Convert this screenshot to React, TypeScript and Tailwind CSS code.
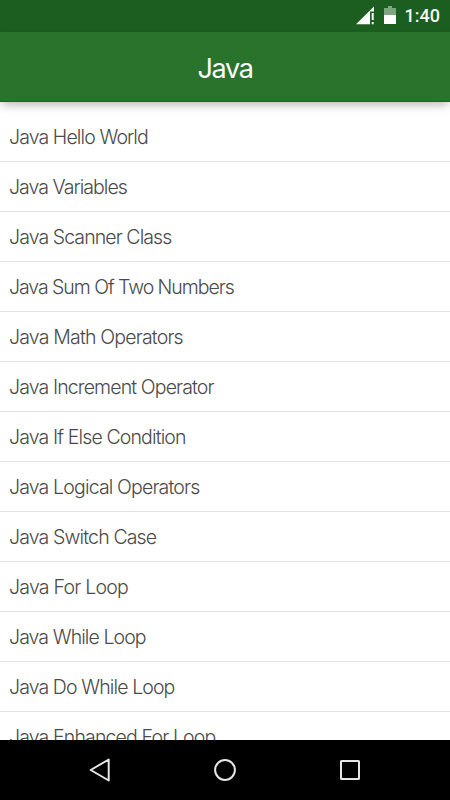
const lessons = [
  { title: "Java Hello World", tracking: "tracking-[-0.89px]" },
  { title: "Java Variables", tracking: "tracking-[-0.96px]" },
  { title: "Java Scanner Class", tracking: "tracking-[-0.91px]" },
  { title: "Java Sum Of Two Numbers", tracking: "tracking-[-1.05px]" },
  { title: "Java Math Operators", tracking: "tracking-[-0.81px]" },
  { title: "Java Increment Operator", tracking: "tracking-[-0.87px]" },
  { title: "Java If Else Condition", tracking: "tracking-[-0.86px]" },
  { title: "Java Logical Operators", tracking: "tracking-[-0.84px]" },
  { title: "Java Switch Case", tracking: "tracking-[-0.85px]" },
  { title: "Java For Loop", tracking: "tracking-[-0.77px]" },
  { title: "Java While Loop", tracking: "tracking-[-0.92px]" },
  { title: "Java Do While Loop", tracking: "tracking-[-0.89px]" },
  { title: "Java Enhanced For Loop", tracking: "tracking-[-0.85px]" },
];

function StatusBar() {
  return (
    <div className="flex h-8 shrink-0 items-center justify-end bg-[#1b5e20] pr-[10px]">
      <svg width="20" height="20" viewBox="0 0 20 20" className="mr-2">
        <path d="M0 18.2 18 .6v4.9h-4v12.7z" fill="#fff" />
        <path d="M15.7 7h2v7h-2zM15.7 16h2v2.2h-2z" fill="#fff" />
      </svg>
      <svg width="12" height="18" viewBox="0 0 12 18" className="mr-[9px] -mt-[2px]">
        <path d="M4 0h4v2h4v7H0V2h4z" fill="#7da680" />
        <path d="M0 9h12v9H0z" fill="#fff" />
      </svg>
      <span className="font-[Roboto,sans-serif] text-lg font-medium text-[#f4f8f4]">1:40</span>
    </div>
  );
}

function Header() {
  return (
    <header className="relative z-10 flex h-[70px] shrink-0 items-center justify-center border-b border-[#1d6422] bg-[#2a732d] pt-[5px] shadow-[0_5px_9px_-2px_rgba(0,0,0,0.28)]">
      <h1 className="font-[Inter,'Liberation_Sans',sans-serif] text-[27px] font-normal tracking-[-1.3px] text-white">Java</h1>
    </header>
  );
}

function NavBar() {
  return (
    <nav className="flex h-[60px] shrink-0 items-center justify-around bg-black px-[37px]">
      <svg width="24" height="24" viewBox="0 0 24 24" fill="none" stroke="#e6e6e6" strokeWidth="2">
        <path d="M20.7 1.5v21L2.7 12z" strokeLinejoin="round" />
      </svg>
      <svg width="24" height="24" viewBox="0 0 24 24" fill="none" stroke="#e6e6e6" strokeWidth="2">
        <circle cx="12" cy="12" r="9.9" />
      </svg>
      <svg width="24" height="24" viewBox="0 0 24 24" fill="none" stroke="#e6e6e6" strokeWidth="2">
        <rect x="3" y="3" width="18" height="18" rx="0.5" />
      </svg>
    </nav>
  );
}

export default function App() {
  return (
    <div className="flex h-[800px] w-[450px] flex-col overflow-hidden bg-white">
      <StatusBar />
      <Header />
      <ul className="min-h-0 flex-1 overflow-hidden pt-[10px] font-[Inter,'Liberation_Sans',sans-serif] text-[19.5px] font-light text-[#4a4a4a]">
        {lessons.map((lesson) => (
          <li key={lesson.title} className="flex h-[50px] items-center border-b border-[#e2e2e2] pt-[3px] pl-[9px]">
            <span className={lesson.tracking}>{lesson.title}</span>
          </li>
        ))}
      </ul>
      <NavBar />
    </div>
  );
}
